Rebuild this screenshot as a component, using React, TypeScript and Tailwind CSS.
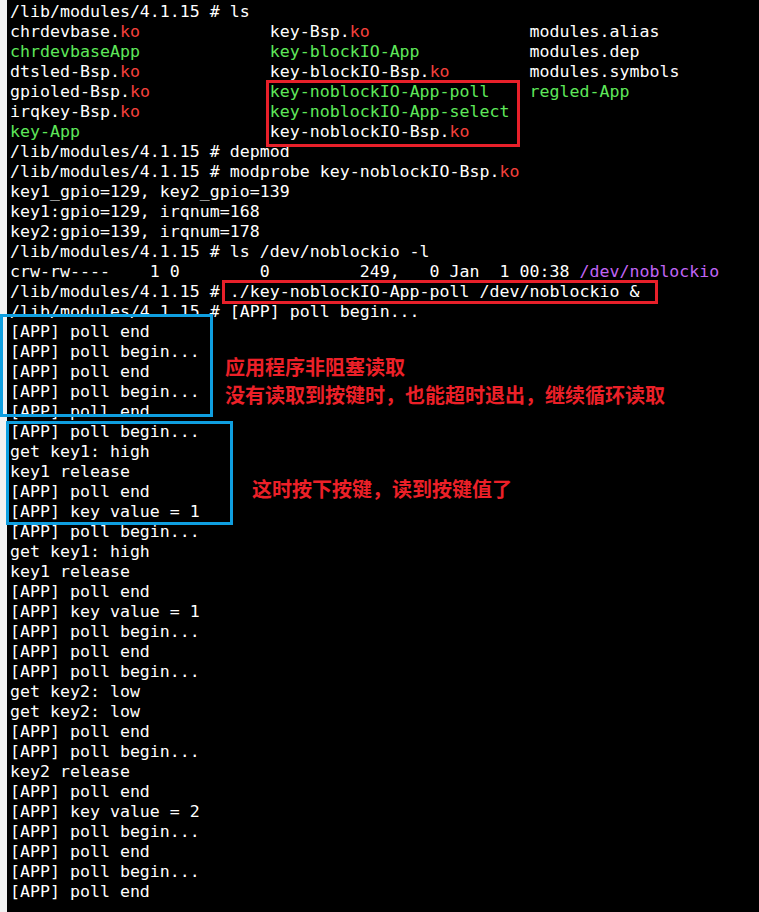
import React from "react";

type Seg = { t: string; c?: "r" | "g" | "m" };
type Line = Seg[];

const W = (t: string): Seg => ({ t });
const R = (t: string): Seg => ({ t, c: "r" });
const G = (t: string): Seg => ({ t, c: "g" });
const M = (t: string): Seg => ({ t, c: "m" });

const sp = (n: number) => " ".repeat(Math.max(0, n));

const lines: Line[] = [
  [W("/lib/modules/4.1.15 # ls")],
  [W("chrdevbase."), R("ko"), W(sp(26 - 13)), W("key-Bsp."), R("ko"), W(sp(26 - 10)), W("modules.alias")],
  [G("chrdevbaseApp"), W(sp(26 - 13)), G("key-blockIO-App"), W(sp(26 - 15)), W("modules.dep")],
  [W("dtsled-Bsp."), R("ko"), W(sp(26 - 13)), W("key-blockIO-Bsp."), R("ko"), W(sp(26 - 18)), W("modules.symbols")],
  [W("gpioled-Bsp."), R("ko"), W(sp(26 - 14)), G("key-noblockIO-App-poll"), W(sp(26 - 22)), G("regled-App")],
  [W("irqkey-Bsp."), R("ko"), W(sp(26 - 13)), G("key-noblockIO-App-select")],
  [G("key-App"), W(sp(26 - 7)), W("key-noblockIO-Bsp."), R("ko")],
  [W("/lib/modules/4.1.15 # depmod")],
  [W("/lib/modules/4.1.15 # modprobe key-noblockIO-Bsp."), R("ko")],
  [W("key1_gpio=129, key2_gpio=139")],
  [W("key1:gpio=129, irqnum=168")],
  [W("key2:gpio=139, irqnum=178")],
  [W("/lib/modules/4.1.15 # ls /dev/noblockio -l")],
  [W("crw-rw----    1 0        0         249,   0 Jan  1 00:38 "), M("/dev/noblockio")],
  [W("/lib/modules/4.1.15 # ./key-noblockIO-App-poll /dev/noblockio &")],
  [W("/lib/modules/4.1.15 # [APP] poll begin...")],
  [W("[APP] poll end")],
  [W("[APP] poll begin...")],
  [W("[APP] poll end")],
  [W("[APP] poll begin...")],
  [W("[APP] poll end")],
  [W("[APP] poll begin...")],
  [W("get key1: high")],
  [W("key1 release")],
  [W("[APP] poll end")],
  [W("[APP] key value = 1")],
  [W("[APP] poll begin...")],
  [W("get key1: high")],
  [W("key1 release")],
  [W("[APP] poll end")],
  [W("[APP] key value = 1")],
  [W("[APP] poll begin...")],
  [W("[APP] poll end")],
  [W("[APP] poll begin...")],
  [W("get key2: low")],
  [W("get key2: low")],
  [W("[APP] poll end")],
  [W("[APP] poll begin...")],
  [W("key2 release")],
  [W("[APP] poll end")],
  [W("[APP] key value = 2")],
  [W("[APP] poll begin...")],
  [W("[APP] poll end")],
  [W("[APP] poll begin...")],
  [W("[APP] poll end")],
];

function SegSpan({ s }: { s: Seg }) {
  if (s.c === "r") return <span className="text-[#f4403c]">{s.t}</span>;
  if (s.c === "g") return <span className="text-[#5ee85a]">{s.t}</span>;
  if (s.c === "m") return <span className="text-[#c065f5]">{s.t}</span>;
  return <span>{s.t}</span>;
}

export default function App() {
  return (
    <div className="relative flex w-[759px] h-[912px] overflow-hidden bg-black">
      <div className="w-[7px] shrink-0 bg-[#f2f2f2]" />
      <div
        className="flex flex-1 flex-col bg-black text-white pt-[2px] pl-[3px] text-[16.6px] leading-[20px] whitespace-pre"
        style={{ fontFamily: '"DejaVu Sans Mono", monospace' }}
      >
        {lines.map((ln, i) => (
          <div key={i} className="h-[20px]">
            {ln.map((s, j) => (
              <SegSpan key={j} s={s} />
            ))}
          </div>
        ))}
      </div>

      {/* Red highlight boxes (overlays) */}
      <div className="absolute left-[266px] top-[80px] w-[254px] h-[67px] border-[3px] border-[#e8202a]" />
      <div className="absolute left-[222px] top-[280px] w-[436px] h-[24px] border-[3px] border-[#e8202a]" />

      {/* Blue highlight boxes (overlays) */}
      <div className="absolute left-0 top-[314px] w-[213px] h-[103px] border-[3px] border-[#0f9fe0]" />
      <div className="absolute left-[6px] top-[421px] w-[227px] h-[104px] border-[3px] border-[#0f9fe0]" />

      {/* Annotation overlays */}
      <div
        className="absolute left-[225px] top-[353px] flex flex-col text-[20px] leading-[28px] font-semibold text-[#ec2028] whitespace-nowrap"
        style={{ fontFamily: '"Noto Sans CJK SC", sans-serif' }}
      >
        <div>应用程序非阻塞读取</div>
        <div>没有读取到按键时，也能超时退出，继续循环读取</div>
      </div>
      <div
        className="absolute left-[252px] top-[475px] text-[20px] leading-[28px] font-semibold text-[#ec2028] whitespace-nowrap"
        style={{ fontFamily: '"Noto Sans CJK SC", sans-serif' }}
      >
        这时按下按键，读到按键值了
      </div>
    </div>
  );
}
